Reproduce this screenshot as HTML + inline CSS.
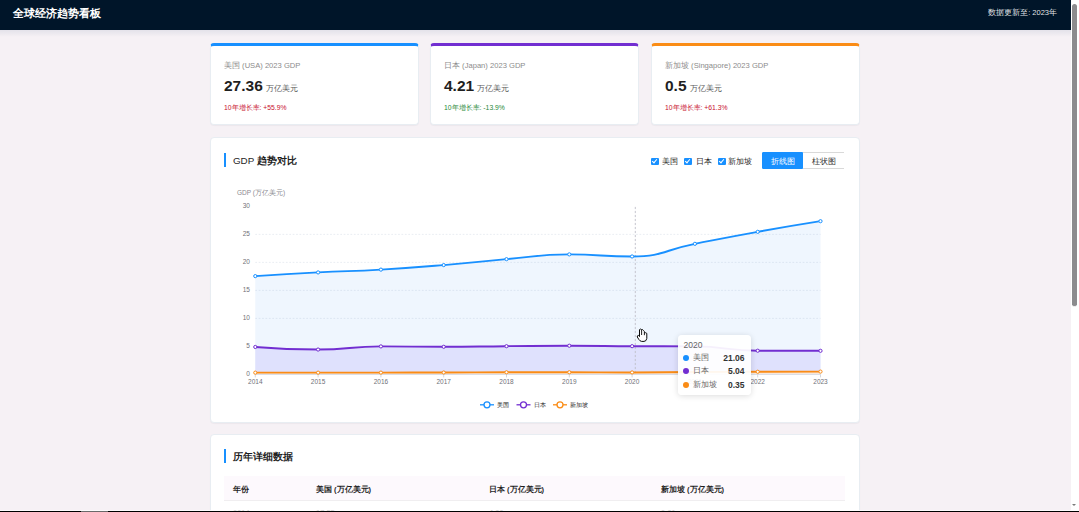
<!DOCTYPE html>
<html><head><meta charset="utf-8">
<style>
*{box-sizing:border-box;margin:0;padding:0}
html,body{width:1079px;height:512px;overflow:hidden}
body{font-family:"Liberation Sans",sans-serif;background:#f6f1f5;position:relative;color:#222}
.hdr{position:absolute;left:0;top:0;width:1071px;height:30px;background:#001529;box-shadow:none}
.hsh{position:absolute;left:0;top:30px;width:1071px;height:7px;background:linear-gradient(rgba(0,40,90,.075),rgba(0,40,90,.04) 50%,rgba(0,40,90,0))}
.hdr .t{position:absolute;left:12.7px;top:4.6px;font-size:11.3px;font-weight:bold;color:#fff;line-height:16px}
.hdr .r{position:absolute;right:14px;top:6.7px;font-size:7.5px;color:rgba(255,255,255,.9);line-height:12px}
.sb{position:absolute;left:1071px;top:0;width:8px;height:512px;background:#fff}
.sb .th{position:absolute;left:1.2px;top:4.2px;width:5px;height:302.4px;background:#8c8b8e;border-radius:2.5px}
.sb .ar{position:absolute;left:1.4px;top:504px;width:0;height:0;border-left:2.4px solid transparent;border-right:2.4px solid transparent;border-top:2.8px solid #7a7a7a}
.bot{position:absolute;left:0;top:510.7px;width:1079px;height:1.3px;background:#000}
.card{position:absolute;background:#fff;border-radius:4px;border:1px solid #e8edf2;box-shadow:0 1px 1px rgba(0,30,60,.04)}
.stat{top:43px;height:82px;width:209px;border-top:3px solid #1890ff}
.stat .l{position:absolute;left:13px;top:15px;font-size:7.6px;color:#8c8c8c;line-height:10px;white-space:nowrap}
.stat .v{position:absolute;left:13px;top:31px;font-size:15.5px;font-weight:bold;color:#1f1f1f;line-height:18px;white-space:nowrap}
.stat .v span{font-size:7.6px;font-weight:normal;color:#595959;margin-left:3px}
.stat .g{position:absolute;left:13px;top:57px;font-size:6.8px;line-height:10px;white-space:nowrap}
.ttl{position:absolute;left:13px;font-size:9.8px;font-weight:bold;color:#1f1f1f;line-height:13px;padding-left:9px;white-space:nowrap}
.ttl i{font-style:normal;font-weight:normal}
.ttl:before{content:"";position:absolute;left:0;top:-1px;width:2.3px;height:14px;background:#1890ff}
.chart{position:absolute;left:0;top:0}
.ax{font-size:6.5px;fill:#707078;font-family:"Liberation Sans",sans-serif}
.yn{font-size:6.5px;fill:#8a8a90;font-family:"Liberation Sans",sans-serif}
.lg text{font-size:6.3px;fill:#222;font-family:"Liberation Sans",sans-serif}
.cbx{position:absolute;top:19.5px;width:7.5px;height:7px;background:#1890ff;border-radius:1px}
.cbx:after{content:"";position:absolute;left:2.3px;top:0.6px;width:2px;height:4px;border:solid #fff;border-width:0 1.2px 1.2px 0;transform:rotate(40deg)}
.cbt{position:absolute;top:18.5px;font-size:7.8px;color:#1f1f1f;line-height:9px;white-space:nowrap}
.bg{position:absolute;left:551px;top:13.5px;height:17.7px;white-space:nowrap;font-size:7.9px;line-height:17px}
.bg span{display:inline-block;width:41px;height:17.7px;text-align:center;vertical-align:top}
.bg .on{background:#1890ff;color:#fff;border:1px solid #1890ff;border-radius:1px 0 0 1px}
.bg .off{background:#fff;color:#333;border:1px solid #d9d9d9;border-left:0;border-right:0}
.tip{position:absolute;left:678px;top:334.5px;width:72.5px;height:60px;background:rgba(255,255,255,.93);border-radius:4px;box-shadow:0 1px 6px rgba(0,0,0,.14)}
.ty{position:absolute;left:5.5px;top:5.5px;font-size:8.5px;color:#666;line-height:10px}
.tr{position:relative;height:13.5px;font-size:8.5px;line-height:10px;color:#666}
.tip .tr:nth-child(2){top:18px}.tip .tr:nth-child(3){top:18px}.tip .tr:nth-child(4){top:18px}
.tr b{position:absolute;left:5px;top:2px;width:6px;height:6px;border-radius:50%}
.tr span{position:absolute;left:14.5px;top:0;font-size:7.8px}
.tr em{position:absolute;right:6px;top:0;font-style:normal;font-weight:bold;color:#333}
.th{position:absolute;left:13px;top:41px;width:621px;height:25px;background:#fdf9fd;border-bottom:1px solid #f0eef0}
.th span,.trw span{position:absolute;top:8.5px;font-size:7.5px;font-weight:bold;color:#1f1f1f;line-height:10px;white-space:nowrap}
.trw{position:absolute;left:13px;top:64.5px;width:621px;height:24px}
</style></head><body>
<div class="hsh"></div><div class="hdr"><div class="t">全球经济趋势看板</div><div class="r">数据更新至: 2023年</div></div>

<div class="card stat" style="left:210px;border-top-color:#1890ff">
  <div class="l">美国 (USA) 2023 GDP</div>
  <div class="v">27.36<span>万亿美元</span></div>
  <div class="g" style="color:#c8102e">10年增长率: +55.9%</div>
</div>
<div class="card stat" style="left:430px;border-top-color:#722ed1">
  <div class="l">日本 (Japan) 2023 GDP</div>
  <div class="v">4.21<span>万亿美元</span></div>
  <div class="g" style="color:#1f8a3a">10年增长率: -13.9%</div>
</div>
<div class="card stat" style="left:651px;border-top-color:#fa8c16">
  <div class="l">新加坡 (Singapore) 2023 GDP</div>
  <div class="v">0.5<span>万亿美元</span></div>
  <div class="g" style="color:#c8102e">10年增长率: +61.3%</div>
</div>

<div class="card" style="left:210px;top:137px;width:650px;height:286px">
  <div class="ttl" style="top:16px"><i>GDP</i> 趋势对比</div>
  <i class="cbx" style="left:440px"></i><span class="cbt" style="left:450.7px">美国</span>
  <i class="cbx" style="left:473px"></i><span class="cbt" style="left:484.6px">日本</span>
  <i class="cbx" style="left:507px"></i><span class="cbt" style="left:516.9px">新加坡</span>
  <div class="bg"><span class="on">折线图</span><span class="off">柱状图</span></div>
</div>
<svg class="chart" width="1079" height="512" viewBox="0 0 1079 512">
<text x="237" y="195" class="yn">GDP (万亿美元)</text>
<path d="M255.30,276.12 C255.30,276.12 286.69,274.05 318.10,272.42 C349.49,270.80 349.53,271.46 380.90,269.62 C412.33,267.79 412.33,267.70 443.70,265.09 C475.13,262.47 475.08,261.83 506.50,259.15 C537.88,256.48 537.86,254.39 569.30,254.39 C600.66,254.39 601.00,256.46 632.10,256.46 C663.80,256.46 663.47,249.97 694.90,243.81 C726.27,237.65 726.24,237.49 757.70,231.82 C789.04,226.18 820.50,221.18 820.50,221.18 L820.50,374.40 L255.30,374.40 Z" fill="#eff6fe"/>
<path d="M255.30,346.96 C255.30,346.96 286.71,349.54 318.10,349.54 C349.51,349.54 349.48,346.40 380.90,346.40 C412.28,346.40 412.30,346.79 443.70,346.79 C475.10,346.79 475.10,346.44 506.50,346.18 C537.90,345.91 537.90,345.73 569.30,345.73 C600.70,345.73 600.70,346.01 632.10,346.18 C663.50,346.34 663.54,346.18 694.90,346.40 C726.34,346.62 726.26,350.60 757.70,350.71 C789.06,350.82 820.50,350.82 820.50,350.82 L820.50,374.40 L255.30,374.40 Z" fill="#dfe1fd"/>
<path d="M255.30,372.66 C255.30,372.66 286.70,372.66 318.10,372.66 C349.50,372.66 349.50,372.65 380.90,372.61 C412.30,372.57 412.30,372.58 443.70,372.50 C475.10,372.41 475.10,372.27 506.50,372.27 C537.90,372.27 537.90,372.27 569.30,372.27 C600.70,372.27 600.70,372.44 632.10,372.44 C663.50,372.44 663.50,372.22 694.90,372.05 C726.30,371.88 726.30,371.88 757.70,371.77 C789.10,371.66 820.50,371.60 820.50,371.60 L820.50,374.40 L255.30,374.40 Z" fill="#fbe9dc"/>
<line x1="255.3" y1="318.40" x2="820.5" y2="318.40" stroke="rgba(110,135,170,0.15)" stroke-width="1" stroke-dasharray="1.7,1.7"/>
<line x1="255.3" y1="290.40" x2="820.5" y2="290.40" stroke="rgba(110,135,170,0.15)" stroke-width="1" stroke-dasharray="1.7,1.7"/>
<line x1="255.3" y1="262.40" x2="820.5" y2="262.40" stroke="rgba(110,135,170,0.15)" stroke-width="1" stroke-dasharray="1.7,1.7"/>
<line x1="255.3" y1="234.40" x2="820.5" y2="234.40" stroke="rgba(110,135,170,0.15)" stroke-width="1" stroke-dasharray="1.7,1.7"/>
<line x1="255.3" y1="374.40" x2="820.5" y2="374.40" stroke="#d8dde6" stroke-width="1"/>
<line x1="255.30" y1="374.40" x2="255.30" y2="377.40" stroke="#c8ccd4" stroke-width="0.8"/>
<line x1="318.10" y1="374.40" x2="318.10" y2="377.40" stroke="#c8ccd4" stroke-width="0.8"/>
<line x1="380.90" y1="374.40" x2="380.90" y2="377.40" stroke="#c8ccd4" stroke-width="0.8"/>
<line x1="443.70" y1="374.40" x2="443.70" y2="377.40" stroke="#c8ccd4" stroke-width="0.8"/>
<line x1="506.50" y1="374.40" x2="506.50" y2="377.40" stroke="#c8ccd4" stroke-width="0.8"/>
<line x1="569.30" y1="374.40" x2="569.30" y2="377.40" stroke="#c8ccd4" stroke-width="0.8"/>
<line x1="632.10" y1="374.40" x2="632.10" y2="377.40" stroke="#c8ccd4" stroke-width="0.8"/>
<line x1="694.90" y1="374.40" x2="694.90" y2="377.40" stroke="#c8ccd4" stroke-width="0.8"/>
<line x1="757.70" y1="374.40" x2="757.70" y2="377.40" stroke="#c8ccd4" stroke-width="0.8"/>
<line x1="820.50" y1="374.40" x2="820.50" y2="377.40" stroke="#c8ccd4" stroke-width="0.8"/>
<line x1="635.3" y1="206.9" x2="635.3" y2="374.40" stroke="#c0c0c8" stroke-width="0.9" stroke-dasharray="2.2,1.8"/>
<path d="M255.30,276.12 C255.30,276.12 286.69,274.05 318.10,272.42 C349.49,270.80 349.53,271.46 380.90,269.62 C412.33,267.79 412.33,267.70 443.70,265.09 C475.13,262.47 475.08,261.83 506.50,259.15 C537.88,256.48 537.86,254.39 569.30,254.39 C600.66,254.39 601.00,256.46 632.10,256.46 C663.80,256.46 663.47,249.97 694.90,243.81 C726.27,237.65 726.24,237.49 757.70,231.82 C789.04,226.18 820.50,221.18 820.50,221.18" fill="none" stroke="#1890ff" stroke-width="1.9"/>
<path d="M255.30,346.96 C255.30,346.96 286.71,349.54 318.10,349.54 C349.51,349.54 349.48,346.40 380.90,346.40 C412.28,346.40 412.30,346.79 443.70,346.79 C475.10,346.79 475.10,346.44 506.50,346.18 C537.90,345.91 537.90,345.73 569.30,345.73 C600.70,345.73 600.70,346.01 632.10,346.18 C663.50,346.34 663.54,346.18 694.90,346.40 C726.34,346.62 726.26,350.60 757.70,350.71 C789.06,350.82 820.50,350.82 820.50,350.82" fill="none" stroke="#722ed1" stroke-width="1.9"/>
<path d="M255.30,372.66 C255.30,372.66 286.70,372.66 318.10,372.66 C349.50,372.66 349.50,372.65 380.90,372.61 C412.30,372.57 412.30,372.58 443.70,372.50 C475.10,372.41 475.10,372.27 506.50,372.27 C537.90,372.27 537.90,372.27 569.30,372.27 C600.70,372.27 600.70,372.44 632.10,372.44 C663.50,372.44 663.50,372.22 694.90,372.05 C726.30,371.88 726.30,371.88 757.70,371.77 C789.10,371.66 820.50,371.60 820.50,371.60" fill="none" stroke="#fa8c16" stroke-width="1.9"/>
<circle cx="255.30" cy="276.12" r="1.6" fill="#fff" stroke="#1890ff" stroke-width="1"/><circle cx="318.10" cy="272.42" r="1.6" fill="#fff" stroke="#1890ff" stroke-width="1"/><circle cx="380.90" cy="269.62" r="1.6" fill="#fff" stroke="#1890ff" stroke-width="1"/><circle cx="443.70" cy="265.09" r="1.6" fill="#fff" stroke="#1890ff" stroke-width="1"/><circle cx="506.50" cy="259.15" r="1.6" fill="#fff" stroke="#1890ff" stroke-width="1"/><circle cx="569.30" cy="254.39" r="1.6" fill="#fff" stroke="#1890ff" stroke-width="1"/><circle cx="632.10" cy="256.46" r="1.6" fill="#fff" stroke="#1890ff" stroke-width="1"/><circle cx="694.90" cy="243.81" r="1.6" fill="#fff" stroke="#1890ff" stroke-width="1"/><circle cx="757.70" cy="231.82" r="1.6" fill="#fff" stroke="#1890ff" stroke-width="1"/><circle cx="820.50" cy="221.18" r="1.6" fill="#fff" stroke="#1890ff" stroke-width="1"/>
<circle cx="255.30" cy="346.96" r="1.6" fill="#fff" stroke="#722ed1" stroke-width="1"/><circle cx="318.10" cy="349.54" r="1.6" fill="#fff" stroke="#722ed1" stroke-width="1"/><circle cx="380.90" cy="346.40" r="1.6" fill="#fff" stroke="#722ed1" stroke-width="1"/><circle cx="443.70" cy="346.79" r="1.6" fill="#fff" stroke="#722ed1" stroke-width="1"/><circle cx="506.50" cy="346.18" r="1.6" fill="#fff" stroke="#722ed1" stroke-width="1"/><circle cx="569.30" cy="345.73" r="1.6" fill="#fff" stroke="#722ed1" stroke-width="1"/><circle cx="632.10" cy="346.18" r="1.6" fill="#fff" stroke="#722ed1" stroke-width="1"/><circle cx="694.90" cy="346.40" r="1.6" fill="#fff" stroke="#722ed1" stroke-width="1"/><circle cx="757.70" cy="350.71" r="1.6" fill="#fff" stroke="#722ed1" stroke-width="1"/><circle cx="820.50" cy="350.82" r="1.6" fill="#fff" stroke="#722ed1" stroke-width="1"/>
<circle cx="255.30" cy="372.66" r="1.6" fill="#fff" stroke="#fa8c16" stroke-width="1"/><circle cx="318.10" cy="372.66" r="1.6" fill="#fff" stroke="#fa8c16" stroke-width="1"/><circle cx="380.90" cy="372.61" r="1.6" fill="#fff" stroke="#fa8c16" stroke-width="1"/><circle cx="443.70" cy="372.50" r="1.6" fill="#fff" stroke="#fa8c16" stroke-width="1"/><circle cx="506.50" cy="372.27" r="1.6" fill="#fff" stroke="#fa8c16" stroke-width="1"/><circle cx="569.30" cy="372.27" r="1.6" fill="#fff" stroke="#fa8c16" stroke-width="1"/><circle cx="632.10" cy="372.44" r="1.6" fill="#fff" stroke="#fa8c16" stroke-width="1"/><circle cx="694.90" cy="372.05" r="1.6" fill="#fff" stroke="#fa8c16" stroke-width="1"/><circle cx="757.70" cy="371.77" r="1.6" fill="#fff" stroke="#fa8c16" stroke-width="1"/><circle cx="820.50" cy="371.60" r="1.6" fill="#fff" stroke="#fa8c16" stroke-width="1"/>
<text x="249.9" y="376.40" text-anchor="end" class="ax">0</text>
<text x="249.9" y="348.40" text-anchor="end" class="ax">5</text>
<text x="249.9" y="320.40" text-anchor="end" class="ax">10</text>
<text x="249.9" y="292.40" text-anchor="end" class="ax">15</text>
<text x="249.9" y="264.40" text-anchor="end" class="ax">20</text>
<text x="249.9" y="236.40" text-anchor="end" class="ax">25</text>
<text x="249.9" y="208.40" text-anchor="end" class="ax">30</text>
<text x="255.30" y="384" text-anchor="middle" class="ax">2014</text>
<text x="318.10" y="384" text-anchor="middle" class="ax">2015</text>
<text x="380.90" y="384" text-anchor="middle" class="ax">2016</text>
<text x="443.70" y="384" text-anchor="middle" class="ax">2017</text>
<text x="506.50" y="384" text-anchor="middle" class="ax">2018</text>
<text x="569.30" y="384" text-anchor="middle" class="ax">2019</text>
<text x="632.10" y="384" text-anchor="middle" class="ax">2020</text>
<text x="694.90" y="384" text-anchor="middle" class="ax">2021</text>
<text x="757.70" y="384" text-anchor="middle" class="ax">2022</text>
<text x="820.50" y="384" text-anchor="middle" class="ax">2023</text>
<g class="lg">
<line x1="480" y1="404.8" x2="494" y2="404.8" stroke="#1890ff" stroke-width="1.3"/><circle cx="487" cy="404.8" r="3" fill="#fff" stroke="#1890ff" stroke-width="1.3"/>
<text x="497" y="407.3">美国</text>
<line x1="516.5" y1="404.8" x2="530.5" y2="404.8" stroke="#722ed1" stroke-width="1.3"/><circle cx="523.5" cy="404.8" r="3" fill="#fff" stroke="#722ed1" stroke-width="1.3"/>
<text x="534" y="407.3">日本</text>
<line x1="553" y1="404.8" x2="567" y2="404.8" stroke="#fa8c16" stroke-width="1.3"/><circle cx="560" cy="404.8" r="3" fill="#fff" stroke="#fa8c16" stroke-width="1.3"/>
<text x="570" y="407.3">新加坡</text>
</g>
</svg>
<div class="tip">
  <div class="ty">2020</div>
  <div class="tr"><b style="background:#1890ff"></b><span>美国</span><em>21.06</em></div>
  <div class="tr"><b style="background:#722ed1"></b><span>日本</span><em>5.04</em></div>
  <div class="tr"><b style="background:#fa8c16"></b><span>新加坡</span><em>0.35</em></div>
</div>

<div class="card" style="left:210px;top:434px;width:650px;height:100px">
  <div class="ttl" style="top:15px">历年详细数据</div>
  <div class="th"><span style="left:9px">年份</span><span style="left:92px">美国 (万亿美元)</span><span style="left:265px">日本 (万亿美元)</span><span style="left:437px">新加坡 (万亿美元)</span></div>
  <div class="trw"><span style="left:9px">2014</span><span style="left:92px">17.55</span><span style="left:265px">4.90</span><span style="left:437px">0.31</span></div>
</div>

<svg class="cur" width="14" height="16" viewBox="0 0 14 16" style="position:absolute;left:636px;top:328px">
<path d="M3.5,8.6 L3.5,1.6 Q4.5,0.5 5.6,1.6 L5.6,1.9 Q6.6,1 7.4,2.4 L8.4,3.6 L8.4,4.9 Q9.8,4.3 10.8,5.4 L10.8,10.4 Q10.4,13.3 8,13.4 L5.6,13.4 Q3.9,13.1 2.8,11.4 L1.3,9 Q1.1,7.5 2.3,7.4 Q3,7.5 3.5,8.6 Z" fill="#fff" stroke="#0a0a0a" stroke-width="1" stroke-linejoin="round"/>
<path d="M5.6,1.9 L5.6,7 M8.4,4.9 L8.4,7.2" stroke="#0a0a0a" stroke-width="0.9" fill="none"/>
</svg>
<div class="sb"><div class="th"></div><div class="ar"></div></div>
<div class="bot"></div><div style="position:absolute;left:0;top:510px;width:1071px;height:0.8px;background:rgba(255,255,255,.8)"></div><div style="position:absolute;left:81px;top:510.8px;width:27px;height:1.2px;background:#6a6a6a"></div>
</body></html>
